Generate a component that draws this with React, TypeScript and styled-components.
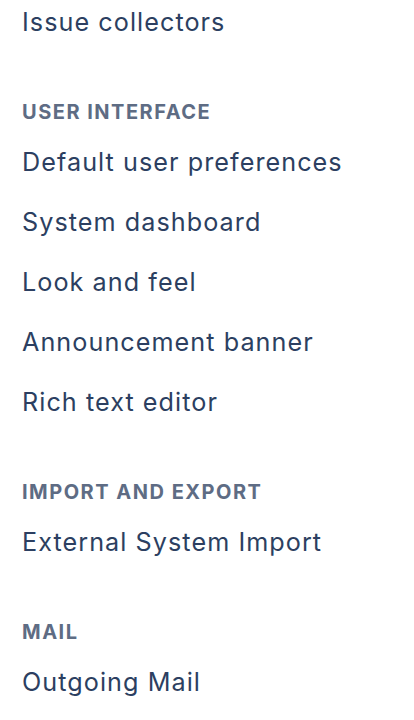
import styled, { createGlobalStyle } from 'styled-components';

const GlobalStyle = createGlobalStyle`
  body {
    margin: 0;
    background: #ffffff;
    font-family: Inter, "Open Sans", "Liberation Sans", sans-serif;
  }
`;

const sections = [
  { title: null, items: ['Issue collectors'] },
  {
    title: 'User interface',
    items: [
      'Default user preferences',
      'System dashboard',
      'Look and feel',
      'Announcement banner',
      'Rich text editor',
    ],
  },
  { title: 'Import and export', items: ['External System Import'] },
  { title: 'Mail', items: ['Outgoing Mail'] },
];

const App = () => {
  return (
    <>
      <GlobalStyle />
      <StyledNav>
        {sections.map((section, index) => (
          <StyledSection key={index}>
            {section.title && <StyledHeading>{section.title}</StyledHeading>}
            {section.items.map((item) => (
              <StyledLink key={item} href="#">
                {item}
              </StyledLink>
            ))}
          </StyledSection>
        ))}
      </StyledNav>
    </>
  );
};

const StyledNav = styled.nav`
  display: flex;
  flex-direction: column;
  margin-top: -8px;
  padding: 0 22px;
`;

const StyledSection = styled.div`
  display: flex;
  flex-direction: column;
`;

const StyledHeading = styled.h3`
  margin: 0;
  padding-top: 40px;
  height: 40px;
  line-height: 40px;
  font-size: 20px;
  font-weight: 700;
  text-transform: uppercase;
  color: #5e6c84;
  letter-spacing: 1.5px;
`;

const StyledLink = styled.a`
  display: block;
  height: 60px;
  line-height: 60px;
  font-size: 25.2px;
  font-weight: 400;
  color: #2c3f61;
  text-decoration: none;
  white-space: nowrap;
  letter-spacing: 1.05px;
`;

export default App;
